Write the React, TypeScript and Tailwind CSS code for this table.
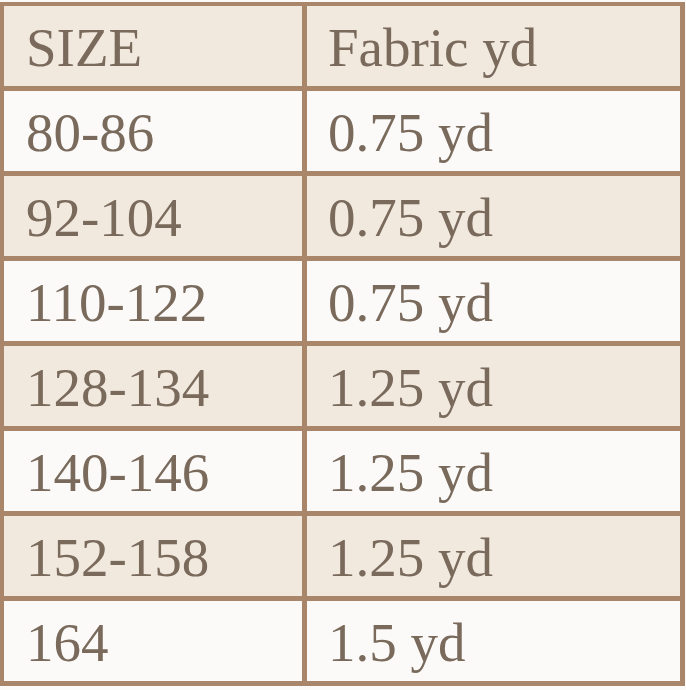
const rows: [string, string][] = [
  ["SIZE", "Fabric yd"],
  ["80-86", "0.75 yd"],
  ["92-104", "0.75 yd"],
  ["110-122", "0.75 yd"],
  ["128-134", "1.25 yd"],
  ["140-146", "1.25 yd"],
  ["152-158", "1.25 yd"],
  ["164", "1.5 yd"],
];

export default function App() {
  return (
    <div className="min-h-screen bg-[#fbfaf8] pt-[2px]">
      <div
        className="w-[685px] grid grid-cols-[298px_373px] gap-[5px] bg-[#a9866a] pt-[4px] pl-[4px] pr-[5px] pb-[5px] text-[#796a5c] text-[55px]"
        style={{ fontFamily: '"Liberation Serif", "DejaVu Serif", serif' }}
      >
        {rows.map(([size, fabric], i) => {
          const bg = i % 2 === 0 ? "bg-[#f1e8de]" : "bg-[#fbfaf8]";
          return [
            <div key={`a${i}`} className={`${bg} h-[80px] pl-[22px] pt-[4px] leading-[76px] whitespace-nowrap`}>
              {size}
            </div>,
            <div key={`b${i}`} className={`${bg} h-[80px] pl-[21px] pt-[4px] leading-[76px] whitespace-nowrap`}>
              {fabric}
            </div>,
          ];
        })}
      </div>
    </div>
  );
}
